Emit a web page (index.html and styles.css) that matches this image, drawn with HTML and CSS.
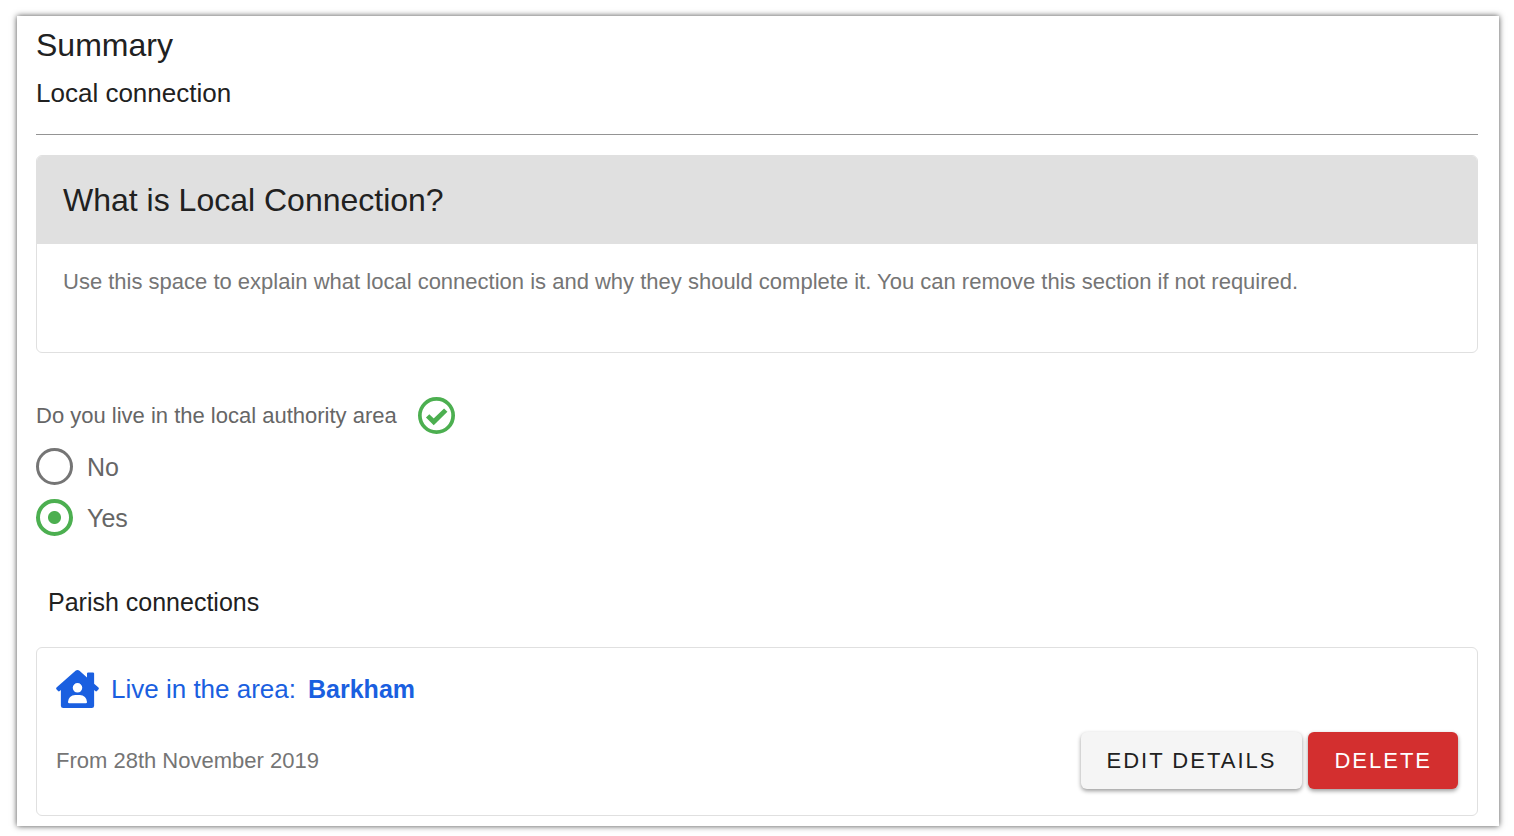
FILE: index.html
```html
<!DOCTYPE html>
<html lang="en">
<head>
    <meta charset="UTF-8">
    <meta name="viewport" content="width=device-width, initial-scale=1.0">
    <title>Summary - Local connection</title>
    <link rel="stylesheet" href="styles.css">
</head>
<body>
    <main class="panel">
        <h1>Summary</h1>
        <p class="subtitle">Local connection</p>
        <hr>

        <section class="card">
            <h2 class="card-title">What is Local Connection?</h2>
            <p class="card-text">Use this space to explain what local connection is and why they should complete it. You can remove this section if not required.</p>
        </section>

        <fieldset class="question">
            <legend>
                <span class="legend-row">
                    Do you live in the local authority area
                    <svg class="check-icon" viewBox="2 2 20 20" aria-hidden="true">
                        <circle cx="12" cy="12" r="9" fill="none" stroke="currentColor" stroke-width="2"/>
                        <path d="M7.2 12.2l3.3 3.2 6.5-6.3" fill="none" stroke="currentColor" stroke-width="2.6"/>
                    </svg>
                </span>
            </legend>
            <div class="option">
                <input type="radio" id="area-no" name="area" value="no">
                <label for="area-no">No</label>
            </div>
            <div class="option">
                <input type="radio" id="area-yes" name="area" value="yes" checked>
                <label for="area-yes">Yes</label>
            </div>
        </fieldset>

        <h3>Parish connections</h3>

        <section class="card connection">
            <div class="connection-title">
                <svg class="house-icon" viewBox="0 0 576 512" aria-hidden="true">
                    <path fill="currentColor" d="M570.69,236.27,512,184.44V48a16,16,0,0,0-16-16H432a16,16,0,0,0-16,16V99.67L314.78,10.3C308.5,4.61,296.53,0,288,0s-20.46,4.61-26.74,10.3l-256,226A18.27,18.27,0,0,0,0,248.2a18.64,18.64,0,0,0,4.09,10.71L25.5,282.7a21.14,21.14,0,0,0,12,5.3,21.67,21.67,0,0,0,10.69-4.11l15.9-14V480a32,32,0,0,0,32,32H480a32,32,0,0,0,32-32V269.88l15.91,14A21.94,21.94,0,0,0,538.63,288a20.89,20.89,0,0,0,11.87-5.31l21.41-23.81A21.64,21.64,0,0,0,576,248.19,21,21,0,0,0,570.69,236.27ZM288,176a64,64,0,1,1-64,64A64,64,0,0,1,288,176ZM400,448H176a16,16,0,0,1-16-16,96,96,0,0,1,96-96h64a96,96,0,0,1,96,96A16,16,0,0,1,400,448Z"/>
                </svg>
                <span>Live in the area:</span>
                <strong>Barkham</strong>
            </div>
            <div class="connection-row">
                <span>From 28th November 2019</span>
                <div class="actions">
                    <button type="button" class="btn">Edit details</button>
                    <button type="button" class="btn btn-delete">Delete</button>
                </div>
            </div>
        </section>
    </main>
</body>
</html>
```
FILE: styles.css
```css
* {
    box-sizing: border-box;
}
body {
    font-family: "Liberation Sans", Arial, sans-serif;
    margin: 0;
    padding: 16px 15px 10px 17px;
    background-color: #fff;
    color: #212121;
}
.panel {
    padding: 9px 21px 10px 19px;
    background-color: #fff;
    box-shadow: 0 0 6px rgba(0, 0, 0, 0.7);
}
h1, h2, h3, p {
    margin: 0;
    font-weight: normal;
}
h1, h2 {
    font-size: 32px;
    line-height: 40px;
}
.subtitle {
    margin-top: 12px;
    font-size: 26px;
    line-height: 32px;
}
hr {
    margin: 25px 0 20px;
    border: 0;
    border-top: 1px solid #949494;
}
.card {
    border: 1px solid #e0e0e0;
    border-radius: 6px;
    overflow: hidden;
}
.card-title {
    padding: 24px 26px;
    background-color: #e0e0e0;
}
.card-text {
    padding: 22px 26px 54px;
    font-size: 22px;
    line-height: 32px;
    color: #757575;
}
.question {
    margin: 44px 0 0;
    padding: 0;
    border: 0;
    color: #666;
}
legend {
    padding: 0;
    font-size: 22px;
    line-height: 32px;
}
.legend-row {
    display: flex;
    align-items: center;
    gap: 21px;
}
.check-icon {
    width: 37px;
    height: 37px;
    color: #4caf50;
}
.option {
    display: flex;
    align-items: center;
    gap: 14px;
    margin-top: 14px;
    font-size: 25px;
    line-height: 36px;
}
.option input {
    appearance: none;
    width: 37px;
    height: 37px;
    margin: 0;
    border: 3px solid #757575;
    border-radius: 50%;
}
.option input:checked {
    border: 4px solid #4caf50;
    background: radial-gradient(circle, #4caf50 6px, transparent 7px);
}
h3 {
    margin: 50px 0 29px;
    padding-left: 12px;
    font-size: 25px;
    line-height: 32px;
}
.connection {
    padding: 21px 19px 26px;
}
.connection-title {
    display: flex;
    align-items: center;
    gap: 12px;
    font-size: 26px;
    line-height: 40px;
    color: #1a5fe0;
}
.connection-title strong {
    font-size: 25px;
}
.house-icon {
    width: 43px;
    height: 38px;
}
.connection-row {
    display: flex;
    align-items: center;
    justify-content: space-between;
    margin-top: 23px;
    font-size: 22px;
    line-height: 32px;
    color: #757575;
}
.actions {
    display: flex;
    gap: 6px;
}
.btn {
    height: 57px;
    padding: 0 26px;
    border: 0;
    border-radius: 6px;
    font-family: inherit;
    font-size: 22px;
    letter-spacing: 2px;
    text-transform: uppercase;
    color: #212121;
    background-color: #f5f5f5;
    box-shadow: 0 2px 4px rgba(0, 0, 0, 0.4);
    cursor: pointer;
}
.btn-delete {
    color: #fff;
    background-color: #d32f2f;
}
```
